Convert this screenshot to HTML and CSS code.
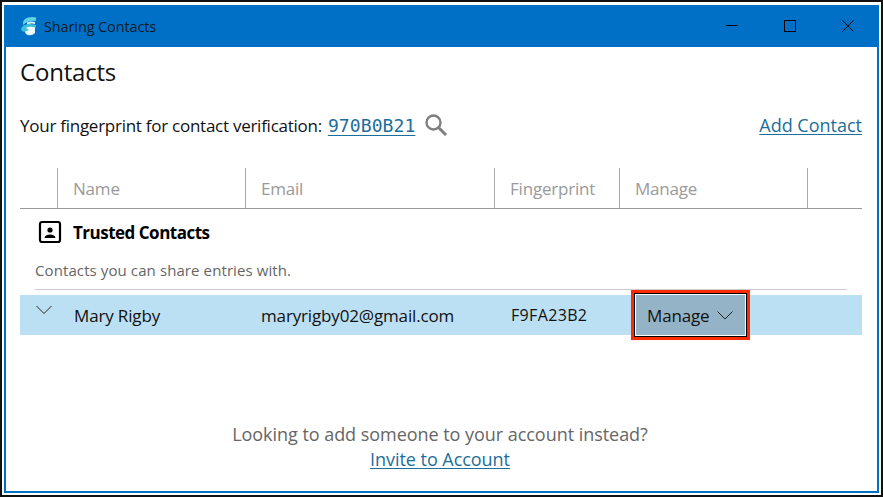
FILE: index.html
```html
<!DOCTYPE html>
<html lang="en">
<head>
<meta charset="utf-8">
<title>Sharing Contacts</title>
<link rel="stylesheet" href="styles.css">
</head>
<body>
<div class="frame">
  <div class="window">
    <header class="titlebar">
      <svg class="app-icon" width="18" height="20" viewBox="0 0 18 20">
        <path d="M7 9 H15 V17 Q12 20 8 19 Q5 18 5 15Z" fill="#eefafc"/>
        <path d="M3 7 Q3 3 8 1.5 Q12 0.5 16 1.5 L16 5 Q9 4 3 9Z" fill="#62d2e6"/>
        <path d="M7 6.5 Q11 5 15 6 L15 8 Q11 7 7 8.5Z" fill="#d5f3f8"/>
        <path d="M1 13 Q2 9 8 8 Q12 7.5 16 9 L16 11.5 Q9 10 6 12 L9 14 L4 16 Q1 15 1 13Z" fill="#3cc0dc"/>
      </svg>
      <span class="title-text">Sharing Contacts</span>
      <div class="controls">
        <svg width="14" height="14" viewBox="0 0 14 14"><path d="M1 6.5H13" stroke="#000" stroke-width="1"/></svg>
        <svg width="14" height="14" viewBox="0 0 14 14"><rect x="1.5" y="1.5" width="11" height="11" fill="none" stroke="#000"/></svg>
        <svg width="14" height="14" viewBox="0 0 14 14"><path d="M1.5 1.5L12.5 12.5M12.5 1.5L1.5 12.5" stroke="#000" fill="none"/></svg>
      </div>
    </header>
    <main class="content">
      <h1 class="heading">Contacts</h1>
      <div class="fingerprint-row">
        <span class="fp-label">Your fingerprint for contact verification:</span>
        <a class="fp-code">970B0B21</a>
        <svg class="search" width="24" height="24" viewBox="0 0 24 24"><circle cx="9.5" cy="9.5" r="7" fill="none" stroke="#808080" stroke-width="2.4"/><path d="M14.5 14.5L22 22" stroke="#808080" stroke-width="3"/></svg>
        <a class="link add-contact">Add Contact</a>
      </div>
      <div class="table-head">
        <div class="th"></div>
        <div class="th">Name</div>
        <div class="th">Email</div>
        <div class="th">Fingerprint</div>
        <div class="th">Manage</div>
        <div class="th last"></div>
      </div>
      <section class="group">
        <div class="group-title">
          <svg width="24" height="24" viewBox="0 0 24 24"><rect x="2" y="2" width="20" height="20" rx="2" fill="none" stroke="#000" stroke-width="2.2"/><circle cx="12" cy="10" r="2.6"/><path d="M6.5 18Q7 14.4 12 14.4T17.5 18Z"/></svg>
          <span>Trusted Contacts</span>
        </div>
        <p class="group-desc">Contacts you can share entries with.</p>
      </section>
      <div class="row">
        <div class="cell chevron"><svg width="16" height="10" viewBox="0 0 16 10"><path d="M0.5 1L8 8.5L15.5 1" fill="none" stroke="#222" stroke-width="1"/></svg></div>
        <div class="cell">Mary Rigby</div>
        <div class="cell">maryrigby02@gmail.com</div>
        <div class="cell fp">F9FA23B2</div>
        <div class="cell btn-cell">
          <button class="manage">Manage <svg width="16" height="9" viewBox="0 0 16 9"><path d="M0.5 0.5L8 8L15.5 0.5" fill="none" stroke="#222" stroke-width="1"/></svg></button>
        </div>
      </div>
      <footer class="invite">
        <p>Looking to add someone to your account instead?</p>
        <a class="link">Invite to Account</a>
      </footer>
    </main>
  </div>
</div>
</body>
</html>
```
FILE: styles.css
```css
* { box-sizing: border-box; }
html, body { margin: 0; padding: 0; }
body {
  width: 883px;
  height: 497px;
  overflow: hidden;
  background: #fff;
  font-family: "Open Sans", "Noto Sans", sans-serif;
  color: #111;
}
.frame {
  width: 883px;
  height: 497px;
  border: 2px solid #111;
  padding: 3px 2px 2px 2px;
  background: #fff;
}
.window {
  height: 100%;
  border: 2px solid #0070c6;
  border-top: 0;
  display: flex;
  flex-direction: column;
  background: #fff;
}
.titlebar {
  height: 42px;
  flex: none;
  margin: 0 -2px;
  padding: 0 24px 0 16px;
  background: #0070c6;
  display: flex;
  align-items: center;
  gap: 6px;
}
.title-text { font-size: 14.5px; letter-spacing: -0.12px; color: #0b1b2b; }
.controls { margin-left: auto; display: flex; gap: 44px; }
.controls svg { display: block; }
.content { flex: 1; padding: 0 15px 0 14px; display: flex; flex-direction: column; min-height: 0; }
.heading {
  margin: 8px 0 0;
  font-size: 24px;
  line-height: 33px;
  font-weight: 400;
  letter-spacing: -0.2px;
  color: #111;
}
.fingerprint-row {
  margin-top: 25px;
  height: 24px;
  display: flex;
  align-items: center;
  font-size: 17px;
  letter-spacing: -0.26px;
}
.fp-code {
  margin-left: 6px;
  font-family: "DejaVu Sans Mono", monospace;
  font-size: 18px;
  letter-spacing: 0.1px;
  color: #1c6e9c;
  text-decoration: underline;
  text-underline-offset: 3px;
}
.search { margin-left: 9px; }
.link { color: #1c6e9c; text-decoration: underline; text-underline-offset: 2px; }
.add-contact { margin-left: auto; font-size: 18px; letter-spacing: 0; }
.table-head {
  margin-top: 31px;
  height: 41px;
  display: grid;
  grid-template-columns: 38px 188px 249px 125px 188px 54px;
  border-bottom: 1px solid #999;
}
.th {
  padding: 9px 0 0 15px;
  font-size: 17px;
  letter-spacing: -0.2px;
  line-height: 23px;
  color: #9a9a9a;
  border-right: 1px solid #aaa;
}
.th.last { border-right: 0; }
.group { margin: 0 15px; border-bottom: 1px solid #ccc; height: 81px; }
.group-title {
  margin-top: 11px;
  display: flex;
  align-items: center;
  gap: 11px;
  padding-left: 3px;
  height: 24px;
  font-size: 17px;
  font-weight: 700;
  letter-spacing: -0.5px;
  color: #000;
}
.group-title svg { flex: none; }
.group-desc { margin: 16px 0 0; font-size: 15px; line-height: 20px; letter-spacing: 0.1px; color: #666; }
.row {
  margin-top: 5px;
  height: 40px;
  background: #bce0f3;
  display: grid;
  grid-template-columns: 37px 187px 250px 125px 1fr;
  align-items: center;
  font-size: 17px;
  letter-spacing: -0.15px;
  color: #111;
}
.cell { padding-left: 17px; }
.chevron { padding-left: 16px; align-self: start; padding-top: 10px; line-height: 0; }
.fp { letter-spacing: 0.35px; font-size: 16px; }
.btn-cell { height: 40px; }
.manage {
  width: 109px;
  height: 40px;
  display: flex;
  align-items: center;
  gap: 7px;
  padding: 0 0 0 11px;
  background: #94b3c6;
  border: 0;
  box-shadow: 0 0 0 1px #fff, 0 0 0 2px #000, 0 0 0 5px #ff2a00;
  font: inherit;
  letter-spacing: inherit;
  color: #111;
}
.invite {
  margin-top: 87px;
  margin-left: -2px;
  text-align: center;
  font-size: 18px;
  letter-spacing: -0.04px;
  line-height: 25px;
  color: #666;
}
.invite p { margin: 0; }
```
